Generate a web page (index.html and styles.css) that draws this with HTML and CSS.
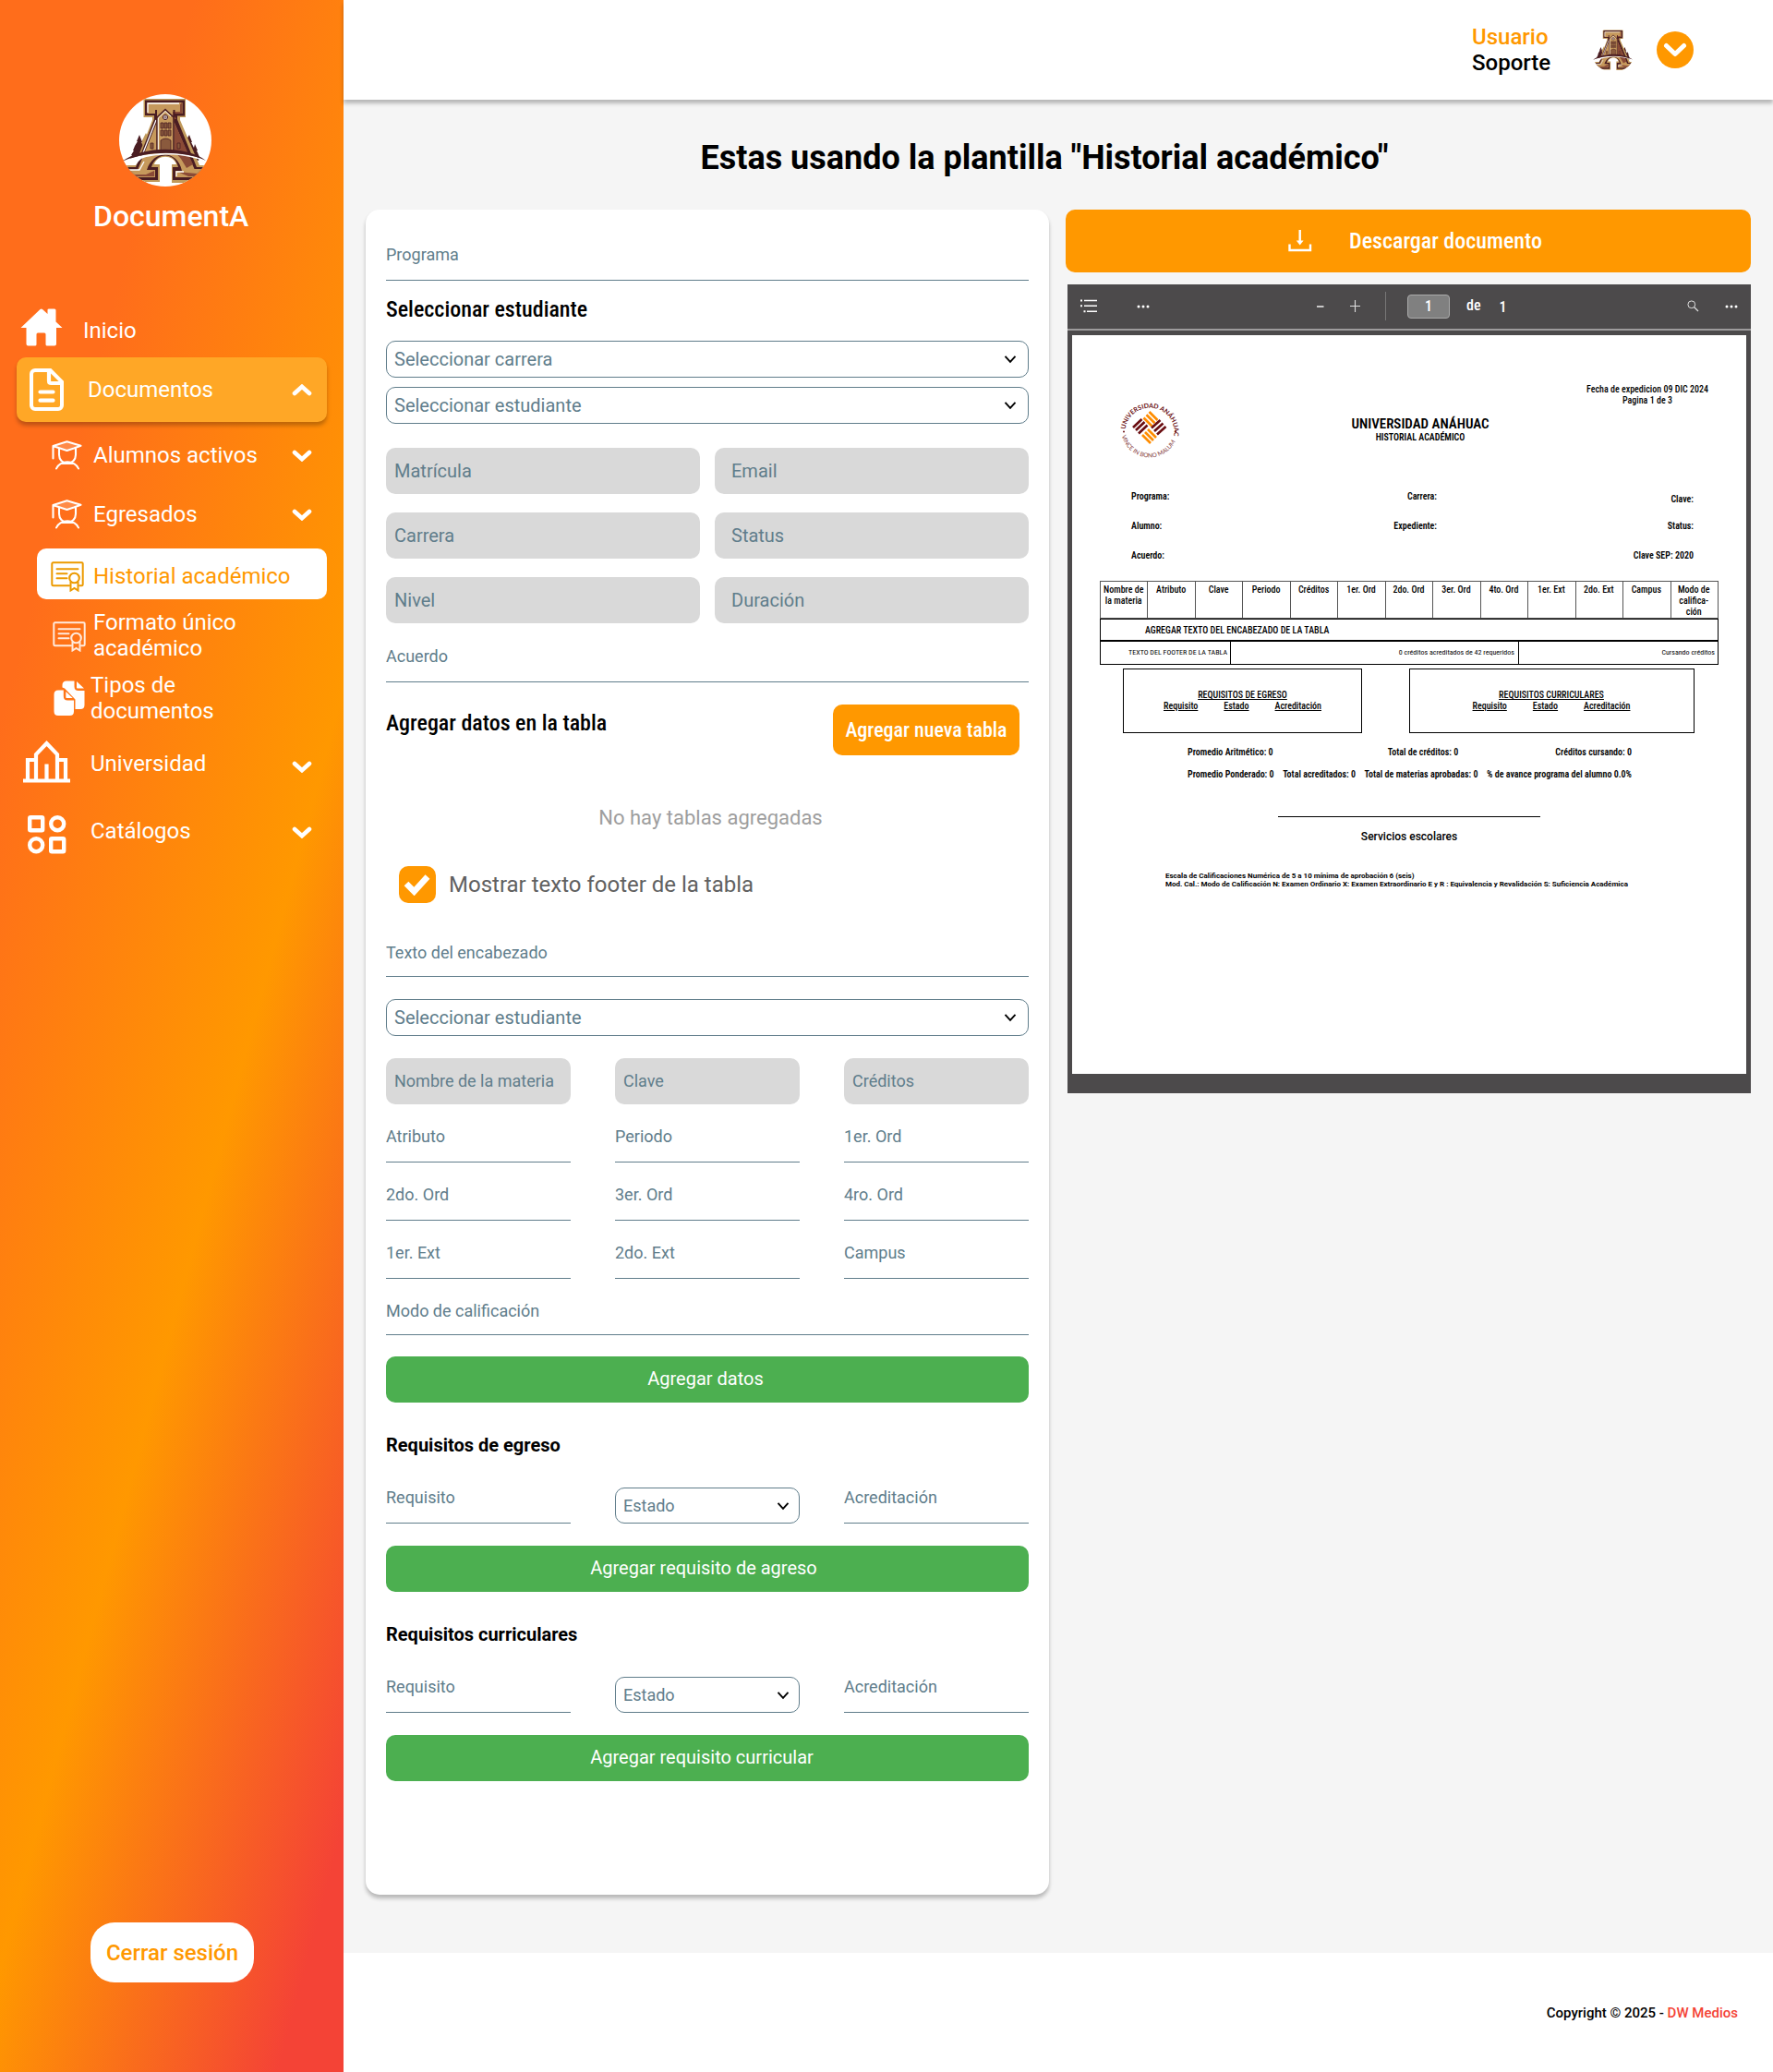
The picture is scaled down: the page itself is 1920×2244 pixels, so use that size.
FILE: index.html
```html
<!DOCTYPE html>
<html lang="es">
<head>
<meta charset="utf-8">
<title>DocumentA - Historial académico</title>
<link rel="stylesheet" href="styles.css">
</head>
<body>
<svg class="sprite" aria-hidden="true">
  <symbol id="logo" viewBox="0 0 100 100">
    <path fill="#c19a5b" d="M22 62l3-12 4-8 3 6-2 14zM78 62l-3-12-4-8-3 6 2 14z"/>
    <path fill="#4a1d22" d="M12 70l2-4-1 0 3-5-1 0 2-5 3-5-1 0 3-7 3 8-1 0 3 6-1 0 3 6-2 6zM69 66V58l2-5-1 0 3-4 3-5 3 8-1 0 3 6 1-4 3 7-1 0 3 7-1 4z"/>
    <path fill="#c19a5b" d="M26.500 5h45.500v20h-6v3l21 49h13l2 19H57V76h5c-3-11-21-11-24 0h6v19H0V77h17L36 28V25H26.500z"/>
    <path fill="#4a1d22" d="M28 6.500h43v17h-8v4L84 79h13v14H58V79h6c-4-17-24-16-29 0h7v14H4V79h14L38 27v-4h-10z"/>
    <path fill="#c6995c" d="M30.500 9h38v12h-9v9l22 51h14v9H61v-7h7C63 60 37 60 30 82h9v8H7v-8h13l21-52v-9H30.500z"/>
    <path fill="#8a4a36" d="M66 11v8h-8v8h4L59 21h9V9zM60 31l20 45-7 4-6-10-7-8zM9 89h29v-6l-9 4-14 0zM63 84l12 5h19v-6l-10 3z"/>
    <path fill="none" stroke="#fff" stroke-width="1.300" d="M31 20V10h34M40 28L25 66M62 89v-5h8M8 82h14l5-9"/>
    <path fill="#c6995c" stroke="#4a1d22" stroke-width="1.600" d="M41 62V25l9-8.500 9 8.500v37z"/>
    <path fill="none" stroke="#fff" stroke-width="1" d="M42.300 60V26l7.700-7.500 6 5.500"/>
    <path fill="none" stroke="#4a1d22" stroke-width="2" d="M40 25v-8M59.500 25v-8"/>
    <circle cx="50" cy="25" r="2.600" fill="#fff" stroke="#4a1d22"/>
    <path stroke="#4a1d22" stroke-width=".7" d="M47 25h6M50 22v6"/>
    <path fill="#8a5a3d" stroke="#4a1d22" stroke-width=".8" d="M45 31h3v6h-3zM49 31h3v6h-3zM53 31h3v6h-3zM45 39h3v6h-3zM49 39h3v6h-3zM53 39h3v6h-3zM45 62V50q5.500-4 11 0v12zM34 53h3v6h-3zM63 53h3v6h-3z"/>
    <path fill="#fff" d="M2 74C27 61 73 60 96 73 73 66 60 65 50 65.500 42 66 30 67 24 70q-4 3-6 7H1z"/>
    <path fill="#4a1d22" d="M3 73C25 56 72 55 94 72 70 61 30 61 3 73z"/>
  </symbol>
  <symbol id="chev" viewBox="0 0 22 13"><path d="M3 3l8 7.200L19 3" fill="none" stroke="currentColor" stroke-width="4.600" stroke-linecap="round"/></symbol>
  <symbol id="caret" viewBox="0 0 14 10"><path d="M1.500 1.800L7 7.800l5.500-6" fill="none" stroke="#000" stroke-width="1.900"/></symbol>
  <symbol id="grad" viewBox="0 0 33 32">
    <path d="M1.500 6.500L16.500 1.500 32 5.800 17 11z" fill="currentColor" fill-opacity=".2"/>
    <path d="M1.500 19.500V6l15-4.700L31.500 5.800l-7.500 2.700-7.500 2.500L9 8.500 2 6.200M8 9v6.500a9 9.500 0 0 0 18 0V8.500M5 30.500a12.500 10 0 0 1 24 0" fill="none" stroke="currentColor" stroke-width="2.100" stroke-linecap="round" stroke-linejoin="round"/>
  </symbol>
  <symbol id="cert" viewBox="0 0 36 33">
    <path d="M20 26.200H2.600a1.300 1.300 0 0 1-1.300-1.300V2.600a1.300 1.300 0 0 1 1.300-1.300h30.800a1.300 1.300 0 0 1 1.300 1.300v22.300a1.300 1.300 0 0 1-1.300 1.300H31M6.500 8.200h23M6.500 13.200h11M6.500 18.200h11" fill="none" stroke="currentColor" stroke-width="2" stroke-linecap="round"/>
    <circle cx="25.500" cy="18" r="5.300" fill="none" stroke="currentColor" stroke-width="2.100"/>
    <path d="M21.500 22v9.500l4-2.500 4 2.500V22" fill="none" stroke="currentColor" stroke-width="2"/>
  </symbol>
</svg>

<div class="app">
  <aside class="sidebar">
    <svg class="brand-logo"><use href="#logo"/></svg>
    <div class="brand">DocumentA</div>
    <nav class="nav">
      <a class="item home"><svg class="ic" width="46" height="41" viewBox="0 0 46 41"><path fill="#fff" d="M21.500 1a2 2 0 0 1 2.500 0l5.500 5V1.500Q29.500.5 31 .5h6q1.500 0 1.500 1.500v12.500L45.500 21H39v17.500q0 2-2 2h-8q-1.500 0-1.500-1.500V28q0-1.500-1.500-1.500h-7q-1.500 0-1.500 1.500v11q0 1.500-1.500 1.500H8.500q-2 0-2-2V21H.5z"/></svg><span>Inicio</span></a>
      <a class="item docs"><svg class="ic" width="37" height="46" viewBox="0 0 37 46"><path d="M6 2h16.500L35 14.500V40a4 4 0 0 1-4 4H6a4 4 0 0 1-4-4V6a4 4 0 0 1 4-4z" fill="none" stroke="#fff" stroke-width="4"/><path d="M21 3v10.500q0 2.500 2.500 2.500H35M11.500 25.500h14M11.500 34.700h14" fill="none" stroke="#fff" stroke-width="4.200" stroke-linecap="round"/></svg><span>Documentos</span><svg class="chev up"><use href="#chev"/></svg></a>
      <a class="item sub"><svg class="ic" width="33" height="32"><use href="#grad"/></svg><span>Alumnos activos</span><svg class="chev"><use href="#chev"/></svg></a>
      <a class="item sub second"><svg class="ic" width="33" height="32"><use href="#grad"/></svg><span>Egresados</span><svg class="chev"><use href="#chev"/></svg></a>
      <a class="item current"><svg class="ic" width="36" height="33"><use href="#cert"/></svg><span>Historial académico</span></a>
      <a class="item formato"><svg class="ic" width="36" height="33"><use href="#cert"/></svg><span>Formato único<br>académico</span></a>
      <a class="item tipos"><svg class="ic" width="34" height="39" viewBox="0 0 34 39"><path fill="#fff" d="M9.500 7.500V5q0-4.500 4.500-4.500h8.500v6Q22.500 11 27 11h6.500v15.500q0 4.500-4.500 4.500h-5.500V20.500L12 8.500zM25 1l8 7.500h-7.200q-.8 0-.8-.8z"/><path fill="#fff" d="M5 10.500h5.800V17q0 4.500 4.500 4.500H22V33.500q0 4.500-4.500 4.500H5Q.5 38 .5 33.500V15q0-4.500 4.500-4.500z"/><path fill="#fff" d="M13.300 12l7.500 7h-6.700q-.8 0-.8-.8z"/></svg><span>Tipos de<br>documentos</span></a>
      <a class="item uni"><svg class="ic" width="51" height="47" viewBox="0 0 51 47"><path d="M0 44.500h51M5 44V22h9M46 44V22h-9M14 44V16L25.500 4 37 16v28M25.500 44V26.500" fill="none" stroke="#fff" stroke-width="4.200"/></svg><span>Universidad</span><svg class="chev low"><use href="#chev"/></svg></a>
      <a class="item cat"><svg class="ic" width="42" height="42" viewBox="0 0 42 42"><g fill="none" stroke="#fff" stroke-width="4.400"><rect x="2.200" y="2.200" width="14" height="14" rx="1"/><circle cx="32.200" cy="9.200" r="7"/><circle cx="9.200" cy="32.200" r="7"/><rect x="25.200" y="25.200" width="14" height="14" rx="1"/></g></svg><span>Catálogos</span><svg class="chev low2"><use href="#chev"/></svg></a>
    </nav>
    <button class="logout">Cerrar sesión</button>
  </aside>

  <div class="main">
    <header class="topbar">
      <div class="user"><span class="role">Usuario</span><span>Soporte</span></div>
      <svg class="avatar"><use href="#logo"/></svg>
      <span class="caret-btn"><svg width="26" height="16" viewBox="0 0 26 16"><path d="M3.500 3.500l9.500 9 9.500-9" fill="none" stroke="#fff" stroke-width="5" stroke-linecap="round" stroke-linejoin="round"/></svg></span>
    </header>
    <main class="content">
      <h1 class="title">Estas usando la plantilla "Historial académico"</h1>
      <div class="columns">
        <section class="form">
          <div class="field first">Programa</div>
          <h2 class="h2 sel-head">Seleccionar estudiante</h2>
          <div class="select">Seleccionar carrera<svg class="caret"><use href="#caret"/></svg></div>
          <div class="select stacked">Seleccionar estudiante<svg class="caret"><use href="#caret"/></svg></div>
          <div class="grid2">
            <div class="ro">Matrícula</div><div class="ro wide">Email</div>
            <div class="ro">Carrera</div><div class="ro wide">Status</div>
            <div class="ro">Nivel</div><div class="ro wide">Duración</div>
          </div>
          <div class="field acuerdo">Acuerdo</div>
          <div class="table-head"><h2 class="h2">Agregar datos en la tabla</h2><button class="add-table">Agregar nueva tabla</button></div>
          <p class="empty">No hay tablas agregadas</p>
          <div class="check"><span class="box"><svg width="30" height="24" viewBox="0 0 30 24"><path d="M3 11l8.500 8.500L26 3.500" fill="none" stroke="#fff" stroke-width="6.600"/></svg></span><span>Mostrar texto footer de la tabla</span></div>
          <div class="field tight enc">Texto del encabezado</div>
          <div class="select third">Seleccionar estudiante<svg class="caret"><use href="#caret"/></svg></div>
          <div class="grid3">
            <div class="ro small">Nombre de la materia</div><div class="ro small">Clave</div><div class="ro small">Créditos</div>
            <div class="field">Atributo</div><div class="field">Periodo</div><div class="field">1er. Ord</div>
            <div class="field">2do. Ord</div><div class="field">3er. Ord</div><div class="field">4ro. Ord</div>
            <div class="field">1er. Ext</div><div class="field">2do. Ext</div><div class="field">Campus</div>
          </div>
          <div class="field tight modo">Modo de calificación</div>
          <button class="green">Agregar datos</button>
          <h3 class="h3">Requisitos de egreso</h3>
          <div class="grid3 req">
            <div class="field short">Requisito</div><div class="select mini">Estado<svg class="caret"><use href="#caret"/></svg></div><div class="field short">Acreditación</div>
          </div>
          <button class="green egreso">Agregar requisito de agreso</button>
          <h3 class="h3">Requisitos curriculares</h3>
          <div class="grid3 req">
            <div class="field short">Requisito</div><div class="select mini">Estado<svg class="caret"><use href="#caret"/></svg></div><div class="field short">Acreditación</div>
          </div>
          <button class="green curricular">Agregar requisito curricular</button>
        </section>

        <section class="preview">
          <button class="download"><svg width="26" height="24" viewBox="0 0 26 24"><path d="M1.500 15.500V22h22.500V15.500M12.700 0v13" fill="none" stroke="#fff" stroke-width="2.400"/><path fill="#fff" d="M8.800 11.500h7.800l-3.900 5z"/></svg><span>Descargar documento</span></button>
          <div class="viewer">
            <div class="toolbar">
              <svg class="t-list" width="19" height="15" viewBox="0 0 19 15"><path d="M4 1.500h14M4 7.300h14M7 13.200h11" stroke="#fff" stroke-width="1.500"/><path d="M0 1.500h2M0 7.300h2M3.500 13.200h2" stroke="#fff" stroke-width="2"/></svg>
              <svg class="t-dots" width="14" height="4" viewBox="0 0 14 4" fill="#fff"><circle cx="2" cy="2" r="1.500"/><circle cx="7" cy="2" r="1.500"/><circle cx="12" cy="2" r="1.500"/></svg>
              <svg class="t-minus" width="8" height="2" viewBox="0 0 8 2"><path d="M0 1h7.500" stroke="#fff" stroke-width="1.400"/></svg>
              <svg class="t-plus" width="11" height="13" viewBox="0 0 11 13"><path d="M0 6.500h11M5.500 0v13" stroke="#ddd" stroke-width="1.100"/></svg>
              <span class="t-sep"></span>
              <span class="t-page">1</span>
              <span class="t-de">de</span>
              <span class="t-total">1</span>
              <svg class="t-search" width="13" height="13" viewBox="0 0 13 13"><path d="M7.500 7.500L12 12" stroke="#ddd" stroke-width="1.200"/><circle cx="4.800" cy="4.800" r="3.900" fill="none" stroke="#ddd"/></svg>
              <svg class="t-dots2" width="14" height="4" viewBox="0 0 14 4" fill="#fff"><circle cx="2" cy="2" r="1.500"/><circle cx="7" cy="2" r="1.500"/><circle cx="12" cy="2" r="1.500"/></svg>
            </div>
            <div class="page">
              <div class="issued">Fecha de expedicion 09 DIC 2024<br>Pagina 1 de 3</div>
              <div class="doc-head">
                <svg class="seal" width="66" height="66" viewBox="-33 -33 66 66">
                  <defs><path id="arc-top" d="M-26.500 3A26.600 26.600 0 0 1 26.500 3L26 12"/><path id="arc-bot" d="M-30.500 7A31 31 0 0 0 30.500 7L31 0"/></defs>
                  <text class="seal-top"><textPath href="#arc-top" startOffset="1">UNIVERSIDAD ANÁHUAC</textPath></text>
                  <text class="seal-bot"><textPath href="#arc-bot" startOffset="2">VINCE IN BONO MALUM</textPath></text>
                  <circle cx="-28" cy="4.500" r="1" fill="#6b0f12"/><circle cx="28" cy="4.500" r="1" fill="#6b0f12"/>
                  <g fill="none" stroke-width="2.700">
                    <path stroke="#ff8c00" d="M-6.500-10.500l9 9M-3.500-13.800l9 9M-.5-17l9 9M-8 8l9 9M-5 5l9 9M-2 2l9 9"/>
                    <path stroke="#6b0f12" d="M-18 0l9.500-9M-15 3l9.500-9M-12 6.500l9.500-9M2 .5l9.500-8.500M5 4l9.500-8.500M8 7.500l9.500-8.500"/>
                  </g>
                </svg>
                <div class="doc-title"><strong>UNIVERSIDAD ANÁHUAC</strong><span>HISTORIAL ACADÉMICO</span></div>
              </div>
              <div class="meta">
                <span>Programa:</span><span>Carrera:</span><span class="drop">Clave:</span>
                <span>Alumno:</span><span>Expediente:</span><span>Status:</span>
                <span>Acuerdo:</span><span></span><span>Clave SEP: 2020</span>
              </div>
              <div class="grades">
                <div class="cols"><span>Nombre de la materia</span><span>Atributo</span><span>Clave</span><span>Periodo</span><span>Créditos</span><span>1er. Ord</span><span>2do. Ord</span><span>3er. Ord</span><span>4to. Ord</span><span>1er. Ext</span><span>2do. Ext</span><span>Campus</span><span>Modo de califica-<br>ción</span></div>
                <div class="band">AGREGAR TEXTO DEL ENCABEZADO DE LA TABLA</div>
                <div class="foot"><span>TEXTO DEL FOOTER DE LA TABLA</span><span>0 créditos acreditados de 42 requeridos</span><span>Cursando créditos</span></div>
              </div>
              <div class="reqs">
                <div class="reqbox"><u>REQUISITOS DE EGRESO</u><div><u>Requisito</u><u>Estado</u><u>Acreditación</u></div></div>
                <div class="reqbox wide"><u>REQUISITOS CURRICULARES</u><div><u>Requisito</u><u>Estado</u><u>Acreditación</u></div></div>
              </div>
              <div class="totals"><span>Promedio Aritmético: 0</span><span class="credits">Total de créditos: 0</span><span>Créditos cursando: 0</span></div>
              <div class="totals"><span>Promedio Ponderado: 0</span><span>Total acreditados: 0</span><span>Total de materias aprobadas: 0</span><span>% de avance programa del alumno 0.0%</span></div>
              <div class="sign">Servicios escolares</div>
              <div class="notes">Escala de Calificaciones Numérica de 5 a 10 mínima de aprobación 6 (seis)<br>Mod. Cal.: Modo de Calificación N: Examen Ordinario X: Examen Extraordinario E y R : Equivalencia y Revalidación S: Suficiencia Académica</div>
            </div>
          </div>
        </section>
      </div>
    </main>
    <footer class="footer"><span>Copyright © 2025 - <em>DW Medios</em></span></footer>
  </div>
</div>
</body>
</html>
```
FILE: styles.css
```css
* { box-sizing: border-box; }
body { margin: 0; font-family: Roboto, sans-serif; color: #000; }
h1, h2, h3, p { margin: 0; }
button { border: 0; padding: 0; font-family: inherit; color: #fff; }
.sprite { display: none; }
.app { display: flex; width: 1920px; height: 2244px; }

/* sidebar */
.sidebar {
  flex: none; width: 372px; display: flex; flex-direction: column; color: #fff;
  background: linear-gradient(105deg, #ff6d1b 21.5%, #ff9800 58.7%, #f44336 92.7%);
}
.brand-logo { width: 100px; height: 100px; margin: 102px 0 0 129px; border-radius: 50%; background: #fff; }
.brand { margin: 13px 0 0 101px; font-size: 32px; font-weight: 500; line-height: 38px; }
.nav { display: flex; flex-direction: column; margin-top: 74px; font-size: 24px; line-height: 28px; }
.item { display: flex; align-items: center; }
.item .ic { flex: none; }
.chev { width: 22px; height: 13px; margin-left: auto; margin-right: 34.500px; }
.home { height: 60px; padding-left: 22px; }
.home span { margin: 2px 0 0 22px; }
.home .ic { margin-top: -6px; }
.docs { height: 70px; margin: 0 18px; padding-left: 14px; border-radius: 10px; background: #ffa726; box-shadow: 0 4px 4px rgba(0,0,0,.25); }
.docs span { margin-left: 26px; }
.docs .chev { margin-right: 16.500px; }
.up { transform: rotate(180deg); }
.sub { height: 64px; padding-left: 56px; margin-top: 4px; }
.sub.second { margin-top: 0; }
.sub span { margin-left: 12px; }
.current { height: 55px; margin: 5px 18px 0 40px; padding: 5px 0 0 15px; border-radius: 10px; background: #fff; color: #ff9800; }
.current .ic { color: #ec9a00; }
.current span { margin-left: 10px; }
.formato { height: 56px; margin-top: 11px; padding-left: 57px; }
.formato .ic { color: #ffe9dc; margin-top: 3px; }
.formato span { margin-left: 8px; }
.tipos { height: 56px; margin-top: 12px; padding-left: 58px; }
.tipos span { margin-left: 6px; }
.uni { height: 60px; margin-top: 13px; padding-left: 25px; }
.uni .ic { margin-top: -5px; }
.uni span { margin: -1px 0 0 22px; }
.low { margin-top: 7px; }
.cat { height: 60px; margin-top: 15px; padding-left: 30px; }
.cat .ic { margin-top: 3px; }
.cat span { margin: -4px 0 0 26px; }
.low2 { margin-top: -2px; }
.logout { width: 177px; height: 65px; margin: auto auto 97px 98px; border-radius: 26px; background: #fff; color: #ff9800; font-size: 24px; font-weight: 500; }

/* top bar */
.main { flex: 1; display: flex; flex-direction: column; background: #f5f5f5; }
.topbar { height: 108px; flex: none; display: flex; align-items: center; justify-content: flex-end; padding-right: 86px; background: #fff; box-shadow: 0 4px 4px rgba(0,0,0,.25); }
.user { display: flex; flex-direction: column; width: 129px; font-size: 24px; font-weight: 500; line-height: 28px; }
.role { color: #ff9800; }
.avatar { width: 48px; height: 48px; border-radius: 50%; margin-right: 23px; }
.caret-btn { width: 40px; height: 40px; border-radius: 50%; background: #ff9800; display: flex; align-items: center; justify-content: center; }

.content { height: 2007px; flex: none; padding: 0 24px; }
.title { margin-top: 41px; padding-right: 30px; height: 44px; text-align: center; font: 700 36px/44px Roboto, sans-serif; }
.columns { display: flex; justify-content: space-between; margin-top: 34px; align-items: flex-start; }

/* form */
.form { width: 740px; height: 1825px; padding: 33px 22px 0; border-radius: 15px; background: #fff; box-shadow: 0 4px 4px rgba(0,0,0,.25); font-size: 20px; color: #607d8b; }
.field { height: 44px; line-height: 32px; border-bottom: 1px solid #607d8b; font-size: 18px; }
.field.tight { height: 42px; }
.field.short { height: 39px; line-height: 22px; }
.h2 { font: 500 24px/29px "Roboto Condensed", Roboto, sans-serif; font-stretch: 75%; color: #000; }
.sel-head { margin: 17px 0 19px; }
.select { display: flex; align-items: center; height: 40px; padding: 0 12px 0 8px; border: 1px solid #607d8b; border-radius: 10px; }
.caret { width: 14px; height: 10px; margin-left: auto; }
.stacked { margin-top: 10px; }
.grid2 { display: grid; grid-template-columns: 1fr 1fr; gap: 20px 16px; margin-top: 26px; }
.ro { height: 50px; line-height: 50px; padding-left: 9px; border-radius: 10px; background: #d9d9d9; white-space: nowrap; }
.ro.wide { padding-left: 18px; }
.ro.small { font-size: 18px; }
.acuerdo { margin-top: 20px; }
.table-head { display: flex; justify-content: space-between; margin-top: 24px; padding-right: 10px; }
.table-head .h2 { line-height: 40px; }
.add-table { width: 202px; height: 55px; border-radius: 10px; background: #ff9800; font: 500 22px "Roboto Condensed", Roboto, sans-serif; font-stretch: 75%; }
.empty { margin-top: 53px; padding-left: 7px; font-size: 22px; line-height: 30px; text-align: center; color: #9e9e9e; }
.check { display: flex; align-items: center; gap: 14px; margin: 37px 0 0 14px; font-size: 24px; color: #616161; }
.box { width: 40px; height: 40px; border-radius: 10px; background: #ff9800; display: flex; align-items: center; justify-content: center; }
.enc { margin-top: 38px; }
.third { margin-top: 24px; }
.grid3 { display: grid; grid-template-columns: repeat(3, 200px); gap: 19px 48px; margin-top: 24px; }
.modo { margin-top: 19px; }
.green { display: block; width: 100%; height: 50px; margin-top: 23px; border-radius: 10px; background: #4caf50; font-size: 20px; padding: 0 4px 2px 0; }
.req + .green { margin-top: 24px; }
.green.egreso { padding-right: 8px; }
.green.curricular { padding-right: 12px; }
.h3 { margin-top: 34px; font-size: 20px; font-weight: 700; line-height: 24px; color: #000; }
.req { margin-top: 34px; }
.mini { height: 39px; padding-right: 10px; font-size: 18px; }

/* pdf preview */
.preview { width: 742px; }
.download { width: 742px; height: 68px; display: flex; align-items: center; padding-left: 241px; gap: 40px; border-radius: 10px; background: #ff9800; font: 500 24px "Roboto Condensed", Roboto, sans-serif; font-stretch: 75%; }
.viewer { width: 740px; height: 876px; margin: 13px 0 0 2px; background: #4c4a4b; font: 500 10px/12px "Roboto Condensed", Roboto, sans-serif; font-stretch: 75%; }
.toolbar { height: 50px; border-bottom: 2px solid #9d9b9c; display: flex; align-items: center; padding: 0 0 1px 14px; color: #fff; font-size: 16px; }
.t-dots { margin-left: 42px; }
.t-minus { margin-left: 181px; }
.t-plus { margin-left: 28px; }
.t-sep { width: 1px; height: 31px; margin-left: 27px; background: #777; }
.t-page { width: 46px; height: 26px; margin-left: 23px; line-height: 24px; text-align: center; border: 1px solid #aaa; border-radius: 4px; background: #808080; }
.t-de { margin: -1px 0 0 18px; }
.t-total { margin: 3px 0 0 20px; }
.t-search { margin-left: auto; margin-right: 28px; }
.t-dots2 { margin-right: 14px; }
.page { width: 730px; height: 800px; margin: 5px; padding: 53px 30px 0; background: #fff; }
.issued { width: 160px; margin-left: 513px; text-align: center; }
.doc-head { display: flex; height: 66px; margin-top: -8px; }
.seal { margin: -2px 0 0 21px; font-family: Lato, sans-serif; }
.seal-top { font-size: 7px; font-weight: 700; fill: #6b0f12; }
.seal-bot { font-size: 6.500px; fill: #8d4a4a; }
.doc-title { display: flex; flex-direction: column; align-items: center; width: 170px; margin: 18px 0 0 175px; line-height: 12px; }
.doc-title strong { font-size: 15px; font-weight: 600; line-height: 18px; white-space: nowrap; }
.doc-title span { font-weight: 600; }
.meta { display: grid; grid-template-columns: 100px 233px 1fr; grid-auto-rows: 32px; margin: 34px 27px 0 34px; font-weight: 600; line-height: 12px; }
.meta span:nth-child(3n+2) { text-align: right; padding-right: 2px; }
.meta span:nth-child(3n) { text-align: right; }
.meta .drop { padding-top: 3px; }
.grades { width: 670px; }
.cols { display: grid; grid-template-columns: repeat(13, 1fr); height: 41px; margin-top: 1px; border: 1px solid #555; border-right: 0; text-align: center; }
.cols span { margin-left: -1px; padding-top: 3px; border-right: 1px solid #555; }
.band { height: 25px; line-height: 23px; padding-left: 48px; border: 1px solid #000; border-bottom-width: 2px; }
.foot { display: flex; height: 25px; font-size: 8px; font-weight: 400; line-height: 24px; text-align: right; border: 1px solid #000; border-top: 0; }
.foot span:nth-child(1) { width: 141px; padding-right: 3px; border-right: 1px solid #000; }
.foot span:nth-child(2) { width: 312px; padding-right: 4px; border-right: 1px solid #000; }
.foot span:nth-child(3) { flex: 1; padding-right: 3px; }
.reqs { display: flex; justify-content: space-between; margin: 4px 26px 0 25px; }
.reqbox { width: 259px; height: 70px; padding-top: 22px; border: 1px solid #000; text-align: center; }
.reqbox.wide { width: 309px; padding-right: 1px; }
.reqbox div { display: flex; justify-content: center; gap: 28px; }
.totals { display: flex; justify-content: space-between; margin: 15px 94px 12px 95px; font-weight: 600; line-height: 12px; }
.totals .credits { padding-left: 19px; }
.totals + .totals { margin: 12px 94px 39px 95px; }
.sign { width: 284px; margin-left: 193px; padding-top: 13px; border-top: 1px solid #000; text-align: center; font: 500 12px/16px Roboto, sans-serif; }
.notes { margin: 30px 0 0 71px; font: 700 8px/9px Roboto, sans-serif; white-space: nowrap; }

.footer { flex: 1; display: flex; align-items: center; justify-content: flex-end; padding-right: 38px; background: #fff; font-size: 15px; font-weight: 500; }
.footer em { font-style: normal; color: #f44336; }
```
